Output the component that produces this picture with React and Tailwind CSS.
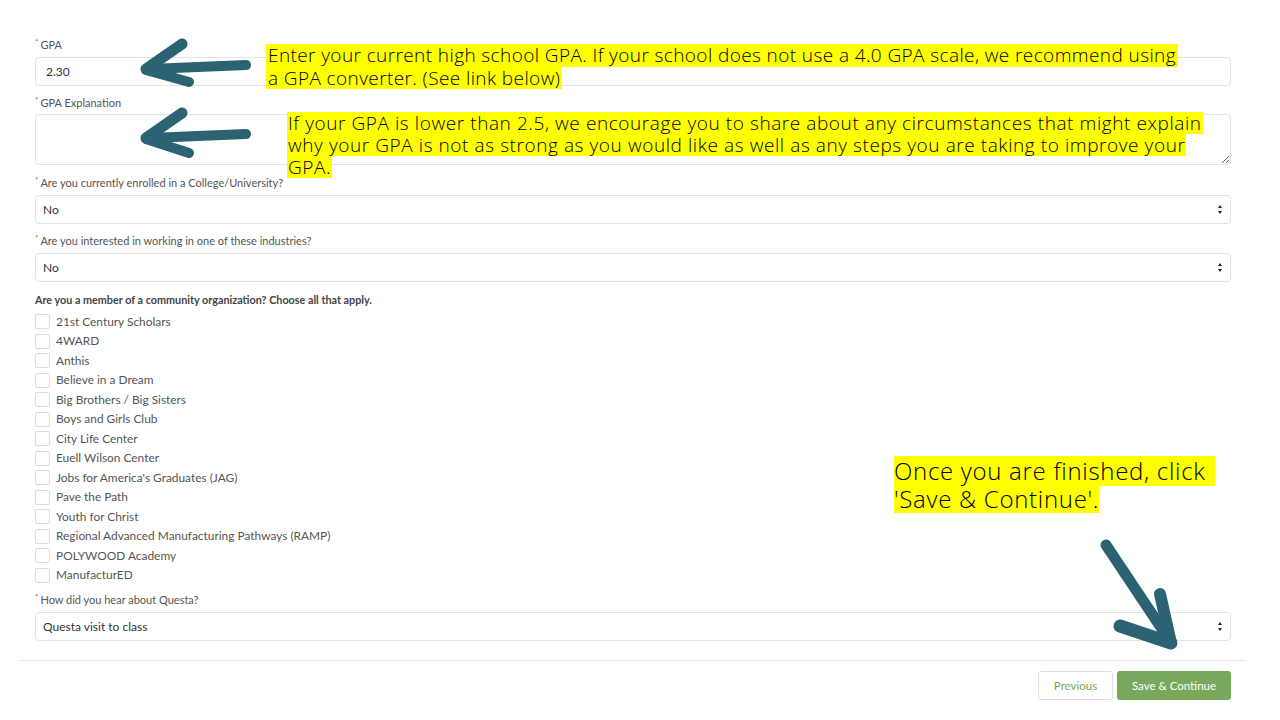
import React from "react";

const lato = { fontFamily: "Lato, 'Open Sans', sans-serif" };

function Label({ children, required = true }) {
  return (
    <div className="h-4 leading-4 text-[11px] text-[#555] flex items-start">
      {required && <span className="text-[#d9534f] text-[8px] leading-[11px] mr-[2px]">*</span>}
      <span>{children}</span>
    </div>
  );
}

function SelectBox({ value }) {
  return (
    <div className="h-[29px] border border-[#e3e3e3] rounded-[4px] bg-white flex items-center justify-between pl-[7px] pr-[6px] text-[12px] text-[#333]">
      <span>{value}</span>
      <svg width="6" height="11" viewBox="0 0 6 11" className="mr-[1px]">
        <path d="M3 1 L5 4 L1 4 Z" fill="#222" />
        <path d="M3 10 L5 7 L1 7 Z" fill="#222" />
      </svg>
    </div>
  );
}

const orgs = [
  "21st Century Scholars",
  "4WARD",
  "Anthis",
  "Believe in a Dream",
  "Big Brothers / Big Sisters",
  "Boys and Girls Club",
  "City Life Center",
  "Euell Wilson Center",
  "Jobs for America's Graduates (JAG)",
  "Pave the Path",
  "Youth for Christ",
  "Regional Advanced Manufacturing Pathways (RAMP)",
  "POLYWOOD Academy",
  "ManufacturED",
];

const annFont = { fontFamily: "'Open Sans', 'Noto Sans', sans-serif" };

export default function App() {
  return (
    <div className="relative w-[1280px] h-[720px] bg-white overflow-hidden" style={lato}>
      <div className="pl-5 pr-5 pt-[37px]">
        <div className="pl-[15px] pr-[29px]">
          <Label>GPA</Label>
          <div className="mt-1 h-[29px] border border-[#e3e3e3] rounded-[4px] flex items-center pl-[10px] text-[12px] text-[#333]">
            2.30
          </div>
          <div className="mt-[9px]">
            <Label>GPA Explanation</Label>
          </div>
          <textarea
            className="mt-[3px] block w-full h-[51px] border border-[#e3e3e3] rounded-[4px] outline-none"
            defaultValue=""
          />
          <div className="mt-[10px]">
            <Label>Are you currently enrolled in a College/University?</Label>
          </div>
          <div className="mt-1">
            <SelectBox value="No" />
          </div>
          <div className="mt-[9px]">
            <Label>Are you interested in working in one of these industries?</Label>
          </div>
          <div className="mt-1">
            <SelectBox value="No" />
          </div>
          <div className="mt-[10px] h-4 leading-4 text-[10.8px] font-bold text-[#444]">
            Are you a member of a community organization? Choose all that apply.
          </div>
          <div className="mt-[4px] flex flex-col">
            {orgs.map((o) => (
              <div key={o} className="h-[19.5px] flex items-center">
                <div className="w-[15px] h-[15px] border border-[#dcdcdc] rounded-[2px] bg-white" />
                <span className="ml-[6px] text-[11.9px] text-[#555]">{o}</span>
              </div>
            ))}
          </div>
          <div className="mt-[7px]">
            <Label>How did you hear about Questa?</Label>
          </div>
          <div className="mt-1">
            <SelectBox value="Questa visit to class" />
          </div>
        </div>
        <div className="mt-[19px] mr-[14px] border-t border-[#e6e6e6]" />
        <div className="mt-[10px] flex justify-end gap-[4px] pr-[29px]">
          <button className="w-[75px] h-[29px] border border-[#dedede] rounded-[3px] bg-white text-[11.5px] text-[#7aa95c]">
            Previous
          </button>
          <button className="w-[114px] h-[29px] rounded-[3px] bg-[#78a85b] text-[11.5px] text-white">
            Save &amp; Continue
          </button>
        </div>
      </div>

      {/* annotation 1 */}
      <div className="absolute left-[266px] top-[44px] flex flex-col items-start text-[19px] font-light tracking-[0.4px] text-black" style={annFont}>
        <div className="bg-[#ffff00] h-[23px] leading-[23px] px-[2px] whitespace-nowrap">
          Enter your current high school GPA. If your school does not use a 4.0 GPA scale, we recommend using
        </div>
        <div className="bg-[#ffff00] h-[22px] leading-[22px] px-[2px] whitespace-nowrap">
          a GPA converter. (See link below)
        </div>
      </div>

      {/* annotation 2 */}
      <div className="absolute left-[287px] top-[112px] flex flex-col items-start text-[19px] font-light tracking-[0.58px] text-black" style={annFont}>
        <div className="bg-[#ffff00] h-[22px] leading-[22px] px-[1px] whitespace-nowrap">
          If your GPA is lower than 2.5, we encourage you to share about any circumstances that might explain
        </div>
        <div className="bg-[#ffff00] h-[22px] leading-[22px] px-[1px] whitespace-nowrap">
          why your GPA is not as strong as you would like as well as any steps you are taking to improve your
        </div>
        <div className="bg-[#ffff00] h-[22px] leading-[22px] px-[1px] whitespace-nowrap">GPA.</div>
      </div>

      {/* annotation 3 */}
      <div className="absolute left-[894px] top-[456px] flex flex-col items-start text-[24px] font-light tracking-[0.7px] text-black" style={annFont}>
        <div className="bg-[#ffff00] h-[30px] leading-[30px] pr-[2px] whitespace-pre">Once you are finished, click </div>
        <div className="bg-[#ffff00] h-[27px] leading-[26px] whitespace-nowrap">'Save &amp; Continue'.</div>
      </div>

      {/* arrows */}
      <svg className="absolute left-0 top-0 pointer-events-none" width="1280" height="720" viewBox="0 0 1280 720">
        <g stroke="#2b6373" strokeLinecap="round" strokeLinejoin="round" fill="none">
          <path d="M246 65 L150 69" strokeWidth="10" />
          <path d="M146 69 L182 44" strokeWidth="11" />
          <path d="M146 70 L189 82" strokeWidth="10" />

          <path d="M246 134 L150 138" strokeWidth="10" />
          <path d="M146 138 L182 113" strokeWidth="11" />
          <path d="M146 139 L189 153" strokeWidth="10" />

          <path d="M1106 545 L1168 638" strokeWidth="11" />
          <path d="M1171 643 L1120 626" strokeWidth="13" />
          <path d="M1171 643 L1160 594" strokeWidth="12" />
        </g>
      </svg>
    </div>
  );
}
